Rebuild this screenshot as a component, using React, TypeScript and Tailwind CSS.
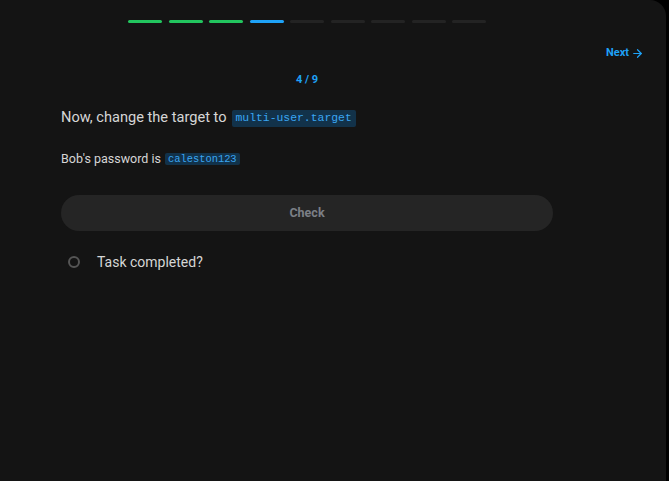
export default function App() {
  const steps = ['done', 'done', 'done', 'current', 'todo', 'todo', 'todo', 'todo', 'todo'];

  return (
    <div className="flex h-screen w-full bg-black" style={{ fontFamily: 'Roboto, "Liberation Sans", sans-serif' }}>
      <div className="mr-[3px] flex-1 rounded-tr-2xl bg-[#141414]">
        {/* progress */}
        <div className="flex w-[553px] justify-center pl-[61px] pt-[20px]">
          <div className="flex gap-[6.5px]">
            {steps.map((s, i) => (
              <div
                key={i}
                className={
                  s === 'done'
                    ? 'h-[3px] w-[34px] rounded-full bg-[#22c55e]'
                    : s === 'current'
                    ? 'h-[3px] w-[34px] rounded-full bg-[#1ea2f7]'
                    : 'h-[3px] w-[34px] rounded-full bg-[#232323]'
                }
              />
            ))}
          </div>
        </div>

        <div className="mt-[22px] flex justify-end pr-[22px]">
          <button className="flex h-[16px] items-center gap-[2px] text-[11px] font-bold text-[#1ea2f7]">
            Next
            <svg width="13" height="13" viewBox="0 0 24 24" fill="none" stroke="currentColor" strokeWidth="2.2" strokeLinecap="round" strokeLinejoin="round">
              <path d="M5 12h14" />
              <path d="m12 5 7 7-7 7" />
            </svg>
          </button>
        </div>

        <div className="ml-[61px] w-[492px]">
          <div className="mt-[11px] flex h-[16px] items-center justify-center text-[11px] font-bold text-[#1ea2f7]">
            4 / 9
          </div>

          <p className="mt-[20px] flex h-[20px] items-center text-[14.6px] text-[#d6d6d6]">
            Now, change the target to
            <code
              className="ml-[5px] rounded-[2px] bg-[#12324a] px-[4px] py-[1px] text-[11.4px] leading-[15px] text-[#3aa6f2]"
              style={{ fontFamily: '"Liberation Mono", monospace' }}
            >
              multi-user.target
            </code>
          </p>

          <p className="mt-[23px] flex h-[16px] items-center text-[12.5px] text-[#d6d6d6]">
            Bob's password is
            <code
              className="ml-[4px] rounded-[2px] bg-[#12324a] px-[3px] text-[10.4px] leading-[12px] text-[#3aa6f2]"
              style={{ fontFamily: '"Liberation Mono", monospace' }}
            >
              caleston123
            </code>
          </p>

          <button className="mt-[28px] flex h-[36px] w-full items-center justify-center rounded-full bg-[#252525] text-[12.5px] font-bold text-[#7b7f85]">
            Check
          </button>

          <label className="mt-[21px] flex h-[20px] items-center">
            <span className="ml-[7px] h-[12px] w-[12px] rounded-full border-2 border-[#555555]" />
            <span className="ml-[17px] text-[14px] text-[#d6d6d6]">Task completed?</span>
          </label>
        </div>
      </div>
    </div>
  );
}
